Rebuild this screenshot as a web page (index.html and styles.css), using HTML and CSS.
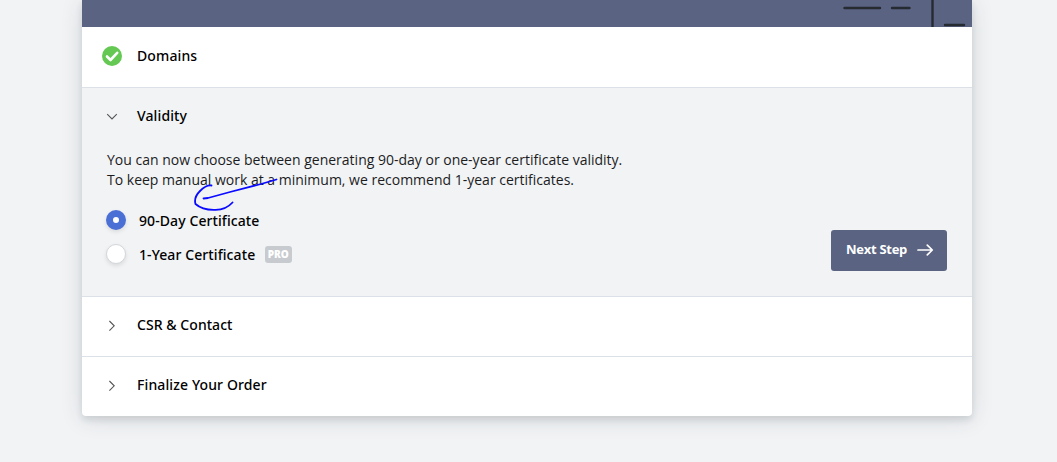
FILE: index.html
```html
<!DOCTYPE html>
<html lang="en">
<head>
<meta charset="utf-8">
<title>New Certificate</title>
<link rel="stylesheet" href="styles.css">
</head>
<body>
<main class="card">
  <div class="banner">
    <svg class="banner-art" width="140" height="27" viewBox="0 0 140 27" fill="none" stroke="#262b31" stroke-width="2.4" stroke-linecap="round">
      <path d="M12.5 8H48M60 8H77.5M113 25H132"/><path d="M100.5 0V27" stroke-linecap="butt"/>
    </svg>
  </div>
  <section class="step">
    <h2 class="step-head">
      <svg class="step-icon" width="20" height="20" viewBox="0 0 20 20"><circle cx="10" cy="10" r="10" fill="#64c853"/><path d="M5 10.5L8.5 14L15.2 6.8" fill="none" stroke="#fff" stroke-width="2.6" stroke-linecap="round" stroke-linejoin="round"/></svg>
      <span>Domains</span>
    </h2>
  </section>
  <section class="step open">
    <h2 class="step-head">
      <svg class="step-icon" width="20" height="20" viewBox="0 0 20 20"><path class="chevron" d="M5.2 8.2L10 13L14.8 8.2"/></svg>
      <span>Validity</span>
    </h2>
    <div class="step-body">
      <p class="intro">You can now choose between generating 90-day or one-year certificate validity.<br>To keep manual work at a minimum, we recommend 1-year certificates.</p>
      <div class="choices">
        <div class="options">
          <label class="option"><span class="radio selected"></span><span class="option-name">90-Day Certificate</span></label>
          <label class="option"><span class="radio"></span><span class="option-name">1-Year Certificate</span><span class="badge">PRO</span></label>
        </div>
        <button class="next"><span class="next-label">Next Step</span><svg width="17" height="14" viewBox="0 0 17 14" fill="none" stroke="#fff" stroke-width="1.7"><path d="M1 7H15M10.3 2.2L15.3 7L10.3 11.8" stroke-linecap="round" stroke-linejoin="round"/></svg></button>
      </div>
    </div>
    <svg class="ink" width="90" height="40" viewBox="0 0 90 40" fill="none" stroke="#0a0aff" stroke-width="1.8" stroke-linecap="round" stroke-linejoin="round"><path d="M21.5 10.5C18 10 13 13 10 16C6 20 4 24 5.5 29C10 33 18 35 25 34.8C33 35 38 32.5 42.5 27.5M13.5 23.5L18 23L40 17L71 9L86.5 4.5"/></svg>
  </section>
  <section class="step">
    <h2 class="step-head">
      <svg class="step-icon" width="20" height="20" viewBox="0 0 20 20"><path class="chevron" d="M7.4 6L12.2 10.8L7.4 15.6"/></svg>
      <span class="contact">CSR &amp; Contact</span>
    </h2>
  </section>
  <section class="step">
    <h2 class="step-head">
      <svg class="step-icon" width="20" height="20" viewBox="0 0 20 20"><path class="chevron" d="M7.4 6L12.2 10.8L7.4 15.6"/></svg>
      <span>Finalize Your Order</span>
    </h2>
  </section>
</main>
</body>
</html>
```
FILE: styles.css
```css
* { box-sizing: border-box; }
body {
  margin: 0;
  height: 462px;
  overflow: hidden;
  background: #f1f3f5;
  color: #000;
  font: 14px/20px "Open Sans", sans-serif;
}
.card {
  width: 890px;
  margin-left: 82px;
  background: #fff;
  border-radius: 0 0 4px 4px;
  box-shadow: 0 4px 6px rgba(50, 55, 65, .12), 0 3px 22px rgba(50, 55, 65, .14);
}
.banner {
  display: flex;
  justify-content: flex-end;
  height: 27px;
  background: #5a6382;
}
.step { position: relative; }
.step + .step { border-top: 1px solid #dbe1e6; }
.open { height: 209px; background: #f1f3f5; }
.step-head {
  display: flex;
  align-items: center;
  gap: 15px;
  height: 60px;
  margin: 0;
  padding: 0 20px 2px;
  font-family: "Noto Sans", "Open Sans", sans-serif;
  font-size: 14px;
  font-weight: 500;
  letter-spacing: .12px;
}
.contact { letter-spacing: .05px; }
.step + .step .step-head { height: 59px; padding-bottom: 3px; }
.chevron { fill: none; stroke: #555; stroke-width: 1.1; }
.step-body { padding: 3px 25px 0; }
.intro { margin: 0; color: #1c1c1e; }
.choices {
  display: flex;
  justify-content: space-between;
  padding-top: 20px;
}
.options {
  display: flex;
  flex-direction: column;
  gap: 14px;
  font-family: "Noto Sans", "Open Sans", sans-serif;
  font-weight: 500;
  letter-spacing: .09px;
}
.option { display: flex; align-items: center; height: 20px; }
.option-name { padding-top: 2px; }
.radio {
  width: 20px;
  height: 20px;
  margin: 0 13px 0 -1px;
  border: 1px solid #d3d6da;
  border-radius: 50%;
  background: #fff;
  box-shadow: 0 2px 4px rgba(0, 0, 0, .1);
}
.selected { border: 7px solid #4b70d5; }
.badge {
  width: 27px;
  height: 17px;
  margin-left: 9.5px;
  border-radius: 3px;
  background: #c7cbd0;
  color: #fff;
  font: 800 10px/17px "Open Sans", sans-serif;
  letter-spacing: 0;
  text-align: center;
}
.next {
  display: flex;
  align-items: center;
  gap: 10px;
  width: 116px;
  height: 41px;
  margin-top: 20px;
  padding: 0 0 2px 15px;
  border: 0;
  border-radius: 3px;
  background: #5a6382;
  color: #fff;
  font: 700 13px/20px "Open Sans", sans-serif;
  letter-spacing: -.28px;
}
.next-label { padding-bottom: 2px; }
.ink { position: absolute; left: 108px; top: 87px; }
```
